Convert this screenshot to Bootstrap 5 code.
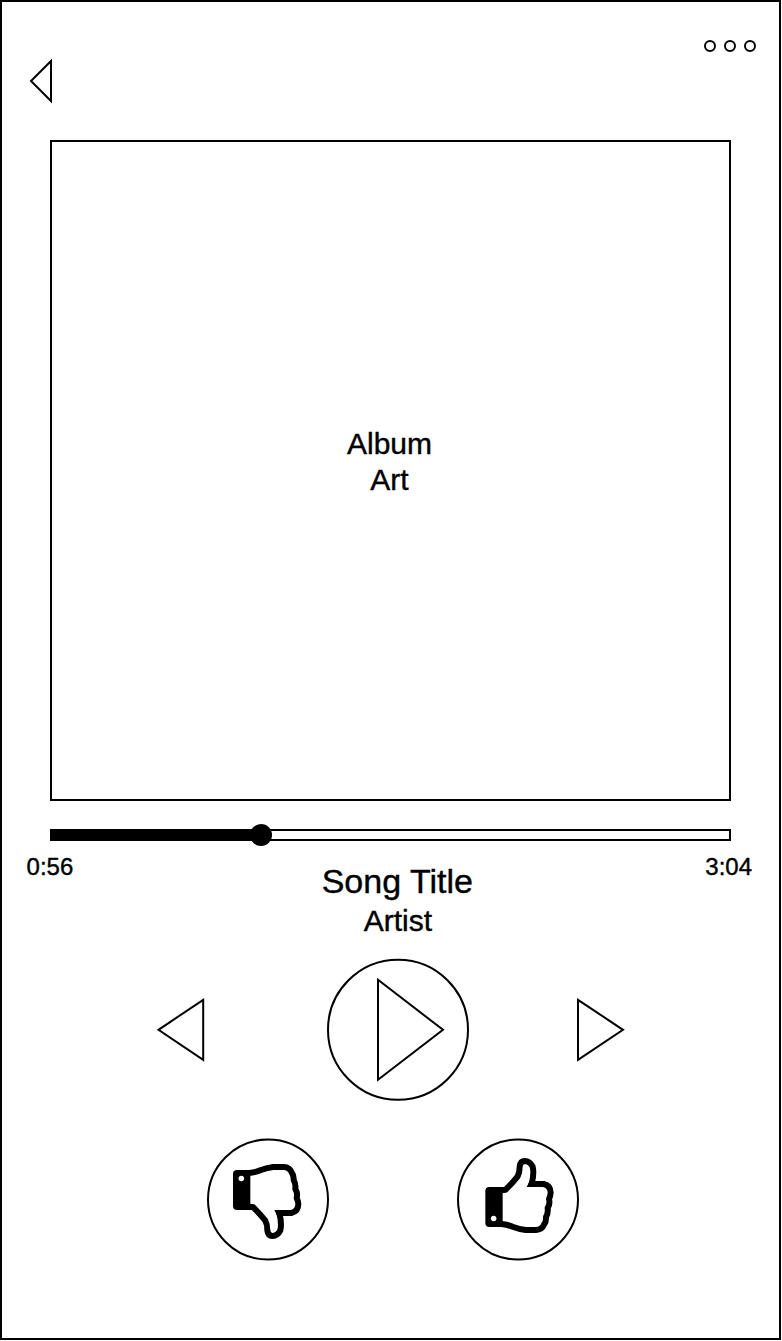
<!DOCTYPE html>
<html lang="en">
<head>
<meta charset="utf-8">
<meta name="viewport" content="width=device-width, initial-scale=1">
<title>Music player</title>
<link href="https://cdn.jsdelivr.net/npm/bootstrap@5.3.0/dist/css/bootstrap.min.css" rel="stylesheet">
<style>
  body { font-family: "Liberation Sans", Arial, sans-serif; color: #000; background: #fff; -webkit-text-stroke: .4px #000; }
  .player { width: 781px; height: 1340.4px; border: 2px solid #000; }
  .topbar { height: 138px; padding: 37px 23px 0 27px; }
  .back-btn { margin-top: 20px; }
  .art { width: 681px; height: 661px; margin-left: 48px; border: 2px solid #000; font-size: 30px; line-height: 36px; padding: 0 2px 17px 0; }
  .track { width: 681px; height: 12px; margin: 28px 0 0 48px; border: 2px solid #000; }
  .knob { width: 22px; height: 22px; }
  .info { padding: 12px 27px 0 24.6px; height: 118px; }
  .time { font-size: 24px; line-height: 28px; width: 48px; }
  .song { font-size: 34px; line-height: 40px; margin-top: 8px; }
  .artist { font-size: 30px; line-height: 36px; margin-top: 2px; padding-left: 1px; }
  .controls { padding: 0 154px; height: 142px; }
  .play-btn { margin-left: 14px; }
  .votes { padding: 38px 0 0 205px; gap: 128px; }
  .plain { background: none; border: 0; padding: 0; display: block; line-height: 0; }
  svg { display: block; fill: none; stroke: #000; stroke-width: 2; overflow: visible; }
</style>
</head>
<body>
<svg width="0" height="0" class="position-absolute" aria-hidden="true">
  <defs>
    <g id="thumb">
      <path stroke-width="18" stroke-linejoin="round" d="M154 181 L167 179 Q188 158 203 139 Q209 128 209 110 Q211 93 224 93 Q240 94 248 110 Q253 131 245 162 L281 162 Q302 167 302 188 Q301 200 297 207 Q301 222 293 234 Q295 249 288 261 Q289 275 282 284 Q276 299 258 300 L227 300 Q208 298 190 291 Q174 284 154 282"/>
      <path fill="#000" stroke="none" d="M230 171 L240 150 L254 171 Z"/>
      <path fill="#000" stroke="none" fill-rule="evenodd" d="M118 171H158V291H118Q106 291 106 279V183Q106 171 118 171ZM131 257a8.5 8.5 0 1 0 .01 0Z"/>
    </g>
  </defs>
</svg>

<main class="player d-flex flex-column">
  <header class="topbar d-flex justify-content-between align-items-start">
    <button class="plain back-btn" aria-label="Back">
      <svg width="24" height="44" viewBox="0 0 24 44"><path d="M22 2 L2 22 L22 42 Z"/></svg>
    </button>
    <button class="plain" aria-label="More">
      <svg width="54" height="14" viewBox="0 0 54 14"><circle cx="8" cy="7" r="5"/><circle cx="28" cy="7" r="5"/><circle cx="48" cy="7" r="5"/></svg>
    </button>
  </header>

  <section class="art d-flex align-items-center justify-content-center text-center">
    <div>Album<br>Art</div>
  </section>

  <div class="track position-relative">
    <div class="h-100 bg-black position-relative" style="width:30.8%">
      <span class="knob bg-black rounded-circle position-absolute top-50 start-100 translate-middle"></span>
    </div>
  </div>

  <section class="info d-flex justify-content-between">
    <div class="time">0:56</div>
    <div class="text-center ps-3">
      <div class="song">Song Title</div>
      <div class="artist">Artist</div>
    </div>
    <div class="time text-end">3:04</div>
  </section>

  <nav class="controls d-flex justify-content-between align-items-center">
    <button class="plain" aria-label="Previous">
      <svg width="48" height="64" viewBox="0 0 48 64"><path d="M47.2 1.8 L2.5 31.8 L47.2 61.8 Z"/></svg>
    </button>
    <button class="plain play-btn" aria-label="Play">
      <svg width="142" height="142" viewBox="0 0 142 142"><circle cx="71" cy="70.8" r="70"/><path d="M51 20.8 L116 70.8 L51 120.8 Z"/></svg>
    </button>
    <button class="plain" aria-label="Next">
      <svg width="48" height="64" viewBox="0 0 48 64"><path d="M1 1.8 L46 31.8 L1 61.8 Z"/></svg>
    </button>
  </nav>

  <div class="votes d-flex">
    <button class="plain" aria-label="Dislike">
      <svg width="122" height="122" viewBox="0 0 122 122"><circle cx="61" cy="60.6" r="60"/><use href="#thumb" transform="scale(.33333) translate(-28 384) scale(1 -1)"/></svg>
    </button>
    <button class="plain" aria-label="Like">
      <svg width="122" height="122" viewBox="0 0 122 122"><circle cx="61" cy="60.6" r="60"/><use href="#thumb" transform="scale(.33333) translate(-21 -27)"/></svg>
    </button>
  </div>
</main>
<script src="https://cdn.jsdelivr.net/npm/bootstrap@5.3.0/dist/js/bootstrap.bundle.min.js"></script>
</body>
</html>
